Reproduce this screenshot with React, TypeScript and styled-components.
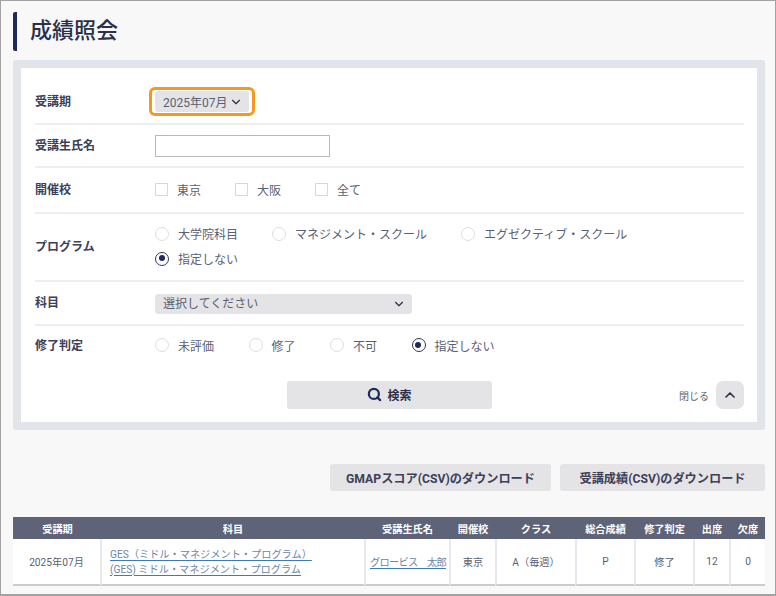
import React from 'react'
import styled, { createGlobalStyle } from 'styled-components'
import { ChevronDown, ChevronUp, Search } from 'lucide-react'

const GlobalStyle = createGlobalStyle`
  html, body {
    margin: 0;
    padding: 0;
    background: #f8f8f8;
  }
  * {
    box-sizing: border-box;
  }
  body {
    font-family: Roboto, "Noto Sans CJK JP", "Noto Sans", sans-serif;
    color: #5a5f73;
  }
`

const Page = styled.div`
  width: 776px;
  height: 596px;
  overflow: hidden;
  background: #f8f8f8;
  border: 1px solid #a3a3a3;
  border-bottom-width: 2px;
  padding: 11px 10px 0 12px;
`

const Title = styled.h1`
  margin: 0;
  height: 39px;
  border-left: 4px solid #1f2a5a;
  border-radius: 2px;
  padding-left: 13px;
  font-size: 22px;
  line-height: 37px;
  font-weight: 500;
  color: #2b3048;
`

const Panel = styled.section`
  margin-top: 9px;
  height: 370px;
  border: 8px solid #e1e4e8;
  border-radius: 3px;
  background: #fff;
  padding: 12px 13px 0 14px;
`

const Row = styled.div<{ $height: number; $last?: boolean }>`
  display: flex;
  align-items: center;
  height: ${(p) => p.$height}px;
  border-bottom: ${(p) => (p.$last ? '0' : '2px solid #eeeeee')};
`

const Label = styled.div`
  width: 120px;
  flex: none;
  margin-bottom: 3px;
  font-size: 12px;
  font-weight: 700;
  color: #3c4059;
`

const OrangeRing = styled.div`
  margin-left: -6px;
  padding: 1px 3px;
  border: 3px solid #f7981d;
  border-radius: 6px;
  display: flex;
`

const Select = styled.div<{ $width: number; $height: number }>`
  display: flex;
  align-items: center;
  justify-content: space-between;
  width: ${(p) => p.$width}px;
  height: ${(p) => p.$height}px;
  padding: 0 6px 0 8px;
  background: #e4e4e6;
  border-radius: 3px;
  font-size: 12px;
  white-space: nowrap;
  color: #5a5f73;
  svg {
    color: #2b3048;
    flex: none;
  }
`

const SubjectSelect = styled(Select)`
  margin-top: 1px;
  padding-bottom: 2px;
  svg {
    margin-top: 2px;
  }
`

const TextInput = styled.input`
  width: 175px;
  height: 22px;
  margin-top: 1px;
  border: 1px solid #b9b9b9;
  background: #fff;
  padding: 0 4px;
  outline: none;
`

const Options = styled.div<{ $maxWidth?: number; $gap?: number }>`
  display: flex;
  flex-wrap: wrap;
  gap: 9px ${(p) => p.$gap ?? 34}px;
  margin-bottom: 2px;
  max-width: ${(p) => (p.$maxWidth ? `${p.$maxWidth}px` : 'none')};
`

const Option = styled.label`
  display: flex;
  align-items: center;
  gap: 9px;
  height: 16px;
  font-size: 12px;
  white-space: nowrap;
  color: #5a5f73;
`

const CheckBox = styled.span`
  width: 13px;
  height: 13px;
  border: 1px solid #d8d8d8;
  background: #fff;
`

const RadioMark = styled.span<{ $checked?: boolean }>`
  position: relative;
  width: 14px;
  height: 14px;
  border-radius: 50%;
  border: ${(p) => (p.$checked ? '1.5px solid #2f3660' : '1.5px solid #dedede')};
  background: #fff;

  &::after {
    content: '';
    display: ${(p) => (p.$checked ? 'block' : 'none')};
    position: absolute;
    left: 2.5px;
    top: 2.5px;
    width: 6px;
    height: 6px;
    border-radius: 50%;
    background: #1f2a5a;
  }
`

const ActionBar = styled.div`
  position: relative;
  display: flex;
  justify-content: center;
  align-items: center;
  margin-top: 15px;
`

const SearchButton = styled.button`
  display: flex;
  align-items: center;
  justify-content: center;
  gap: 5px;
  width: 205px;
  height: 28px;
  border: 0;
  border-radius: 3px;
  background: #e4e4e6;
  font: 700 12px "Noto Sans CJK JP", sans-serif;
  color: #2b3048;
  padding: 0 0 2px;
`

const CloseArea = styled.div`
  position: absolute;
  right: 0;
  top: 0;
  display: flex;
  align-items: center;
  gap: 7px;
  font-size: 10px;
  color: #5a5f73;
`

const CloseButton = styled.button`
  display: flex;
  align-items: center;
  justify-content: center;
  width: 28px;
  height: 28px;
  border: 0;
  border-radius: 7px;
  background: #e4e4e6;
  color: #2b3048;
  padding: 0;
`

const Downloads = styled.div`
  display: flex;
  justify-content: flex-end;
  gap: 9px;
  margin-top: 34px;
`

const DownloadButton = styled.button<{ $width: number }>`
  width: ${(p) => p.$width}px;
  height: 27px;
  border: 0;
  border-radius: 3px;
  background: #e4e4e6;
  font: 700 12.2px Roboto, "Noto Sans CJK JP", sans-serif;
  color: #3c4059;
  padding: 0;
`

const Table = styled.table`
  margin-top: 26px;
  width: 752px;
  table-layout: fixed;
  border-collapse: separate;
  border-spacing: 0;
  background: #fff;
`

const Th = styled.th`
  height: 22px;
  padding: 0;
  background: #5e6378;
  border-left: 2px solid #5e6378;
  color: #fff;
  font-size: 10.2px;
  font-weight: 700;
  text-align: center;
  white-space: nowrap;
`

const Td = styled.td`
  height: 47px;
  padding: 0;
  font-size: 10.2px;
  text-align: center;
  color: #5a5f73;
  border-left: 2px solid #e6eaee;
  border-bottom: 2px solid #cccccc;

  &:first-child {
    border-left: 0;
  }
`

const SubjectCell = styled(Td)`
  text-align: left;
  padding-left: 8px;
  line-height: 15px;
`

const NameCell = styled(Td)`
  text-align: left;
  padding-left: 4px;
  white-space: nowrap;
  letter-spacing: -0.7px;
`

const StyledLink = styled.a`
  color: #6b86a8;
  text-decoration: underline;
  text-decoration-color: #3f7ab8;
  text-underline-offset: 2px;
`

const columns = [87, 264, 85, 46, 80, 59, 59, 36, 36]
const headers = ['受講期', '科目', '受講生氏名', '開催校', 'クラス', '総合成績', '修了判定', '出席', '欠席']

const App: React.FunctionComponent = () => {
  return (
    <Page>
      <GlobalStyle />
      <Title>成績照会</Title>
      <Panel>
        <Row $height={45}>
          <Label>受講期</Label>
          <OrangeRing>
            <Select $width={94} $height={21}>
              2025年07月
              <ChevronDown size={14} strokeWidth={2} />
            </Select>
          </OrangeRing>
        </Row>
        <Row $height={43}>
          <Label>受講生氏名</Label>
          <TextInput type="text" />
        </Row>
        <Row $height={46}>
          <Label>開催校</Label>
          <Options>
            {['東京', '大阪', '全て'].map((name) => (
              <Option key={name}>
                <CheckBox />
                {name}
              </Option>
            ))}
          </Options>
        </Row>
        <Row $height={68}>
          <Label>プログラム</Label>
          <Options $maxWidth={520}>
            {['大学院科目', 'マネジメント・スクール', 'エグゼクティブ・スクール', '指定しない'].map((name) => (
              <Option key={name}>
                <RadioMark $checked={name === '指定しない'} />
                {name}
              </Option>
            ))}
          </Options>
        </Row>
        <Row $height={44}>
          <Label>科目</Label>
          <SubjectSelect $width={257} $height={20}>
            選択してください
            <ChevronDown size={14} strokeWidth={2} />
          </SubjectSelect>
        </Row>
        <Row $height={40} $last>
          <Label>修了判定</Label>
          <Options $gap={34.5}>
            {['未評価', '修了', '不可', '指定しない'].map((name) => (
              <Option key={name}>
                <RadioMark $checked={name === '指定しない'} />
                {name}
              </Option>
            ))}
          </Options>
        </Row>
        <ActionBar>
          <SearchButton>
            <Search size={15} strokeWidth={3.6} color="#1f2a5a" />
            検索
          </SearchButton>
          <CloseArea>
            閉じる
            <CloseButton>
              <ChevronUp size={16} strokeWidth={2.5} />
            </CloseButton>
          </CloseArea>
        </ActionBar>
      </Panel>
      <Downloads>
        <DownloadButton $width={221}>GMAPスコア(CSV)のダウンロード</DownloadButton>
        <DownloadButton $width={205}>受講成績(CSV)のダウンロード</DownloadButton>
      </Downloads>
      <Table>
        <colgroup>
          {columns.map((width, i) => (
            <col key={i} width={width} />
          ))}
        </colgroup>
        <thead>
          <tr>
            {headers.map((h) => (
              <Th key={h}>{h}</Th>
            ))}
          </tr>
        </thead>
        <tbody>
          <tr>
            <Td>2025年07月</Td>
            <SubjectCell>
              <StyledLink href="#">
                GES（ミドル・マネジメント・プログラム）
                <br />
                (GES) ミドル・マネジメント・プログラム
              </StyledLink>
            </SubjectCell>
            <NameCell>
              <StyledLink href="#">グロービス　太郎</StyledLink>
            </NameCell>
            <Td>東京</Td>
            <Td>A（毎週）</Td>
            <Td>P</Td>
            <Td>修了</Td>
            <Td>12</Td>
            <Td>0</Td>
          </tr>
        </tbody>
      </Table>
    </Page>
  )
}

export default App
